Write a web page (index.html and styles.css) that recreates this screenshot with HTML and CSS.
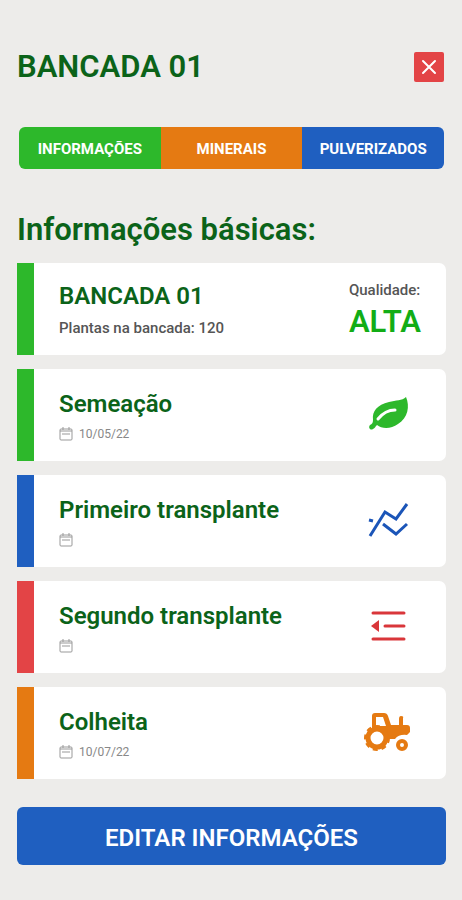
FILE: index.html
```html
<!DOCTYPE html>
<html lang="pt-BR">

<head>
  <meta charset="UTF-8">
  <meta name="viewport" content="width=device-width, initial-scale=1.0">
  <title>Bancada 01</title>
  <link rel="stylesheet" href="styles.css">
</head>

<body>
  <header class="header">
    <h1>BANCADA 01</h1>
    <button class="close" type="button" aria-label="Fechar">
      <svg width="16" height="16" viewBox="0 0 16 16"><path d="M2 2L14 14M14 2L2 14" /></svg>
    </button>
  </header>

  <nav class="tabs">
    <button class="tab green" type="button">INFORMAÇÕES</button>
    <button class="tab orange" type="button">MINERAIS</button>
    <button class="tab blue" type="button">PULVERIZADOS</button>
  </nav>

  <main>
    <h2>Informações básicas:</h2>

    <section class="card card-green">
      <div class="card-text">
        <h3>BANCADA 01</h3>
        <p class="plants">Plantas na bancada: 120</p>
      </div>
      <div class="quality">
        <p class="quality-label">Qualidade:</p>
        <p class="quality-value">ALTA</p>
      </div>
    </section>

    <section class="card card-green">
      <div class="card-text">
        <h3>Semeação</h3>
        <p class="date">
          <svg class="calendar" viewBox="0 0 14 14"><rect x="1" y="2" width="12" height="11" rx="1" /><path d="M1 4H13M4 0V3M10 0V3M3 7H11" /></svg>
          <span>10/05/22</span>
        </p>
      </div>
      <svg class="icon" viewBox="0 0 48 48">
        <path fill="#2db82b" d="M43 6C39 10 33 9 26 11C14 14 9 20 10 29C10 32 9 33 7 34C5 36 7 40 10 38C12 37 12 36 14 34C19 38 28 38 35 33C45 27 47 15 43 6Z" />
        <path fill="none" stroke="#fff" stroke-width="3" stroke-linecap="round" d="M15 28C19 23 24 19 32 19" />
      </svg>
    </section>

    <section class="card card-blue">
      <div class="card-text">
        <h3>Primeiro transplante</h3>
        <p class="date">
          <svg class="calendar" viewBox="0 0 14 14"><rect x="1" y="2" width="12" height="11" rx="1" /><path d="M1 4H13M4 0V3M10 0V3M3 7H11" /></svg>
        </p>
      </div>
      <svg class="icon" viewBox="0 0 48 48">
        <path fill="none" stroke="#1b55b8" stroke-width="3" d="M7 39L22 15L33 22L44 7M20 27L33 37L44 27M6 23L10 24" />
      </svg>
    </section>

    <section class="card card-red">
      <div class="card-text">
        <h3>Segundo transplante</h3>
        <p class="date">
          <svg class="calendar" viewBox="0 0 14 14"><rect x="1" y="2" width="12" height="11" rx="1" /><path d="M1 4H13M4 0V3M10 0V3M3 7H11" /></svg>
        </p>
      </div>
      <svg class="icon" viewBox="0 0 48 48">
        <path fill="none" stroke="#d9363a" stroke-width="3" stroke-linecap="round" d="M10 10H41M22 23H41M10 36H41" />
        <path fill="#d9363a" d="M16 17V29L8 23Z" />
      </svg>
    </section>

    <section class="card card-orange">
      <div class="card-text">
        <h3>Colheita</h3>
        <p class="date">
          <svg class="calendar" viewBox="0 0 14 14"><rect x="1" y="2" width="12" height="11" rx="1" /><path d="M1 4H13M4 0V3M10 0V3M3 7H11" /></svg>
          <span>10/07/22</span>
        </p>
      </div>
      <svg class="icon" viewBox="0 0 48 48">
        <!-- body and cab -->
        <path fill="#e57a12" fill-rule="evenodd" d="M9 20V7Q9 4 12 4H21Q24 4 25 7L28 16H36V10Q36 7 38 7Q41 7 40 9V16H44Q47 16 47 19V23L44 26Q36 25 32 30H24L7 22ZM13 8V17L23 17L20 8Z" />
        <!-- rear wheel -->
        <circle cx="14" cy="29" r="9" fill="#fff" stroke="#e57a12" stroke-width="5" />
        <circle cx="14" cy="29" r="12" fill="none" stroke="#e57a12" stroke-width="2" stroke-dasharray="5 4" />
        <!-- front wheel -->
        <circle cx="39" cy="36" r="8" fill="#fff" />
        <circle cx="39" cy="36" r="4" fill="#fff" stroke="#e57a12" stroke-width="4" />
      </svg>
    </section>
  </main>

  <button class="edit" type="button">EDITAR INFORMAÇÕES</button>
</body>

</html>
```
FILE: styles.css
```css
* {
  box-sizing: border-box;
}

body {
  margin: 0;
  padding: 48px 16px 35px 17px;
  background-color: #edecea;
  font-family: Roboto, sans-serif;
}

h1,
h2,
h3,
p {
  margin: 0;
}

h1,
h2,
h3 {
  color: #0b6319;
  font-weight: 600;
}

h1,
h2 {
  font-size: 31px;
  line-height: 40px;
}

h1 {
  line-height: 38px;
}

h2 {
  margin: 41px 0 13px;
}

h3 {
  font-size: 24px;
  line-height: 32px;
}

button {
  border: none;
  color: #fff;
  font-family: inherit;
  font-weight: 700;
  cursor: pointer;
}

.header {
  display: flex;
  justify-content: space-between;
  align-items: center;
  padding-right: 2px;
  margin-bottom: 41px;
}

.close {
  display: flex;
  align-items: center;
  justify-content: center;
  width: 30px;
  height: 30px;
  padding: 0;
  border-radius: 2px;
  background-color: #e34446;
}

.close path {
  stroke: #fff;
  stroke-width: 2;
  stroke-linecap: round;
}

.tabs {
  display: grid;
  grid-template-columns: repeat(3, 1fr);
  margin: 0 2px;
  border-radius: 6px;
  overflow: hidden;
}

.tab {
  height: 42px;
  padding: 2px 0 0;
  font-size: 15px;
}

.green {
  background-color: #2db82b;
}

.orange {
  background-color: #e57a12;
}

.blue {
  background-color: #1f5fc0;
}

.card {
  display: flex;
  align-items: center;
  justify-content: space-between;
  height: 92px;
  margin-bottom: 14px;
  padding: 0 25px;
  border-left: 17px solid;
  border-radius: 0 7px 7px 0;
  background-color: #fff;
}

.card-text,
.quality {
  padding-top: 6px;
}

.card-green {
  border-color: #2db82b;
}

.card-blue {
  border-color: #1f5fc0;
}

.card-red {
  border-color: #e34446;
}

.card-orange {
  border-color: #e57a12;
}

.plants,
.quality-label {
  color: #555;
  font-size: 15px;
  font-weight: 500;
}

.plants {
  line-height: 32px;
}

.quality-label {
  line-height: 20px;
}

.quality-value {
  color: #12ad16;
  font-size: 31px;
  font-weight: 600;
  line-height: 44px;
}

.date {
  display: flex;
  align-items: center;
  gap: 6px;
  height: 28px;
  color: #888;
  font-size: 12px;
}

.calendar {
  width: 14px;
  height: 14px;
  fill: none;
  stroke: #999;
}

.icon {
  width: 48px;
  height: 48px;
  margin-right: 10px;
}

.edit {
  width: 100%;
  height: 58px;
  margin-top: 14px;
  padding-top: 4px;
  border-radius: 6px;
  background-color: #1f5fc0;
  font-size: 24px;
  font-weight: 600;
}
```
